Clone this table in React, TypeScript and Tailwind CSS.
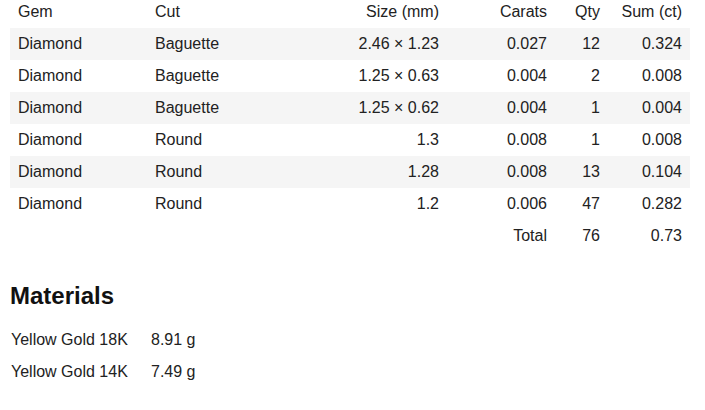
import React from "react";

const rows = [
  ["Diamond", "Baguette", "2.46 × 1.23", "0.027", "12", "0.324"],
  ["Diamond", "Baguette", "1.25 × 0.63", "0.004", "2", "0.008"],
  ["Diamond", "Baguette", "1.25 × 0.62", "0.004", "1", "0.004"],
  ["Diamond", "Round", "1.3", "0.008", "1", "0.008"],
  ["Diamond", "Round", "1.28", "0.008", "13", "0.104"],
  ["Diamond", "Round", "1.2", "0.006", "47", "0.282"],
];

const grid = "grid w-[680px] grid-cols-[137px_150px_150px_108px_53px_82px] h-8 items-center";

function Row({ cells, striped }: { cells: string[]; striped?: boolean }) {
  return (
    <div className={`${grid} ${striped ? "bg-[#f5f5f5]" : ""}`}>
      <div className="px-2">{cells[0]}</div>
      <div className="px-2">{cells[1]}</div>
      <div className="px-2 text-right">{cells[2]}</div>
      <div className="px-2 text-right">{cells[3]}</div>
      <div className="px-2 text-right">{cells[4]}</div>
      <div className="px-2 text-right">{cells[5]}</div>
    </div>
  );
}

export default function App() {
  return (
    <div
      className="w-[705px] h-[410px] overflow-hidden bg-white px-[10px] text-[16px] leading-8 text-[#222]"
      style={{ fontFamily: '"Liberation Sans", Arial, sans-serif' }}
    >
      <div className="-mt-1">
        <Row cells={["Gem", "Cut", "Size (mm)", "Carats", "Qty", "Sum (ct)"]} />
        {rows.map((r, i) => (
          <Row key={i} cells={r} striped={i % 2 === 0} />
        ))}
        <Row cells={["", "", "", "Total", "76", "0.73"]} />
      </div>
      <h2 className="mt-[28px] text-[24px] font-bold leading-8 text-[#111]">Materials</h2>
      <div className="mt-3 grid grid-cols-[141px_auto] w-fit leading-8">
        <div className="pl-px">Yellow Gold 18K</div>
        <div>8.91 g</div>
        <div className="pl-px">Yellow Gold 14K</div>
        <div>7.49 g</div>
      </div>
    </div>
  );
}
